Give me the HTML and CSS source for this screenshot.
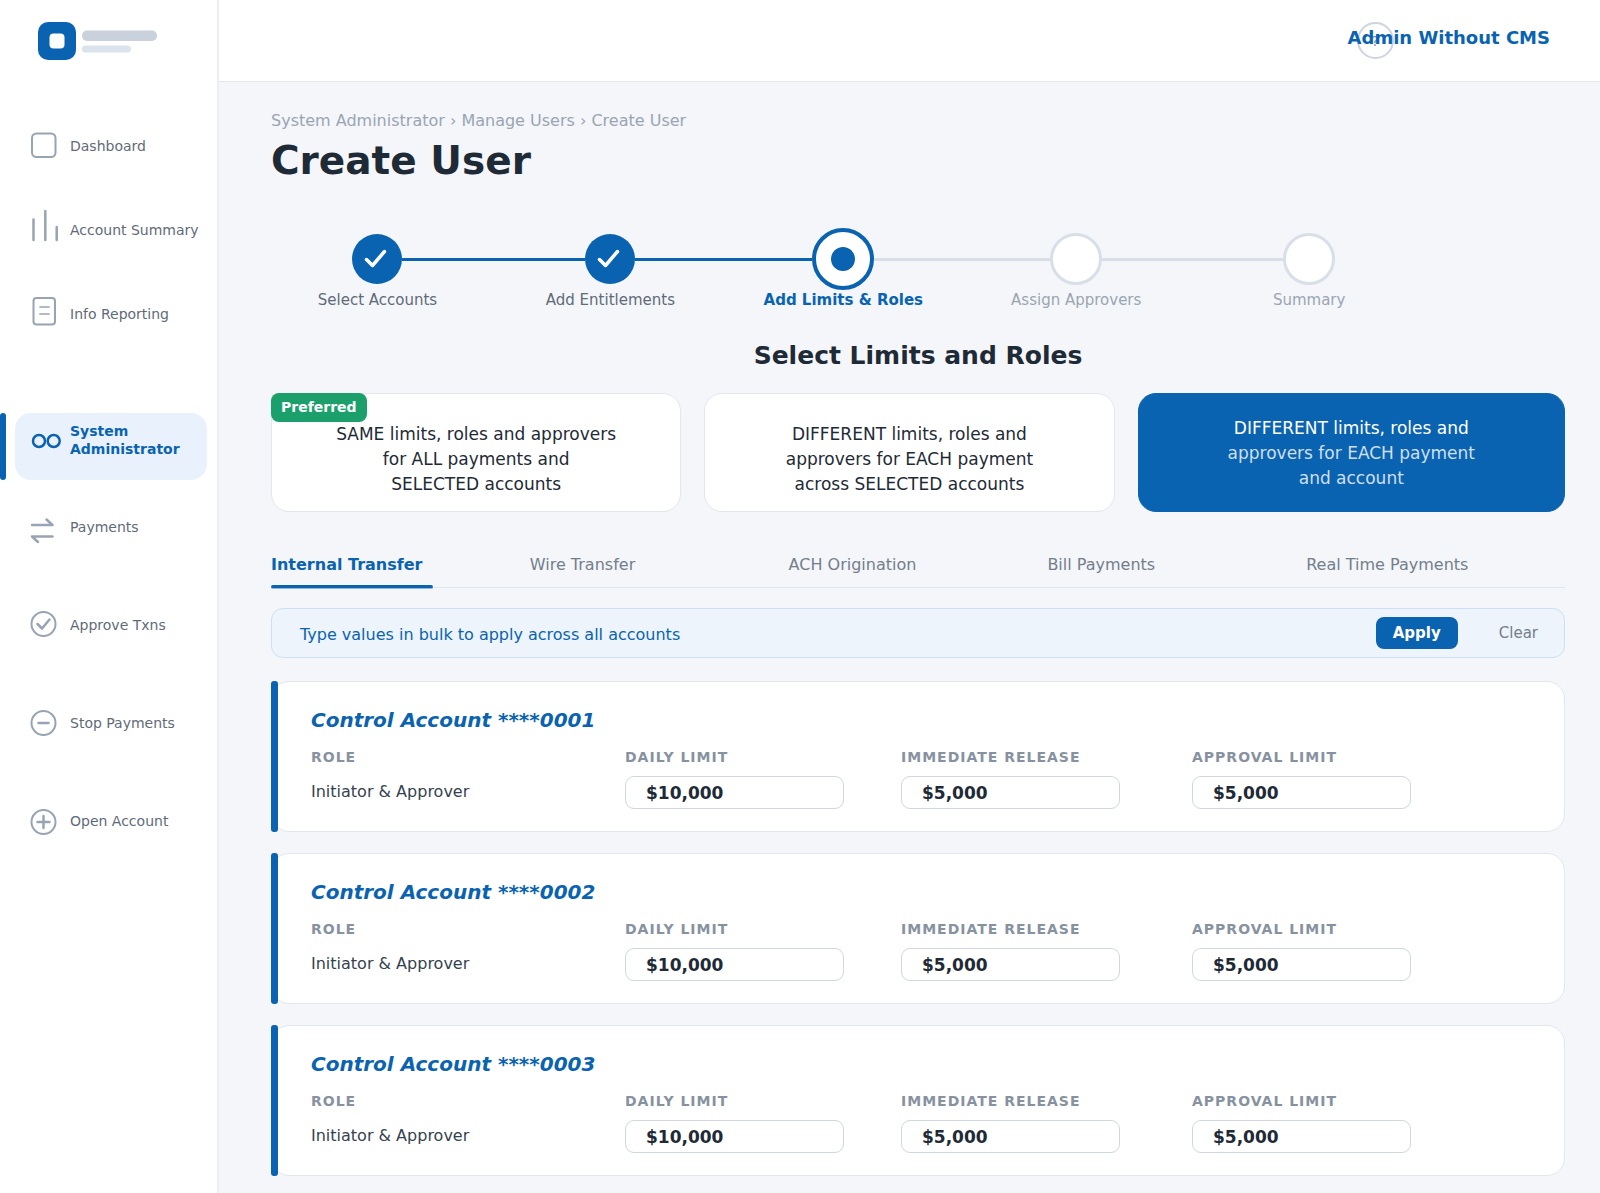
FILE: index.html
```html
<!DOCTYPE html>
<html lang="en">
<head>
<meta charset="UTF-8">
<meta name="viewport" content="width=device-width, initial-scale=1.0">
<title>Create User</title>
<link rel="stylesheet" href="styles.css">
</head>
<body>

<aside class="sidebar">
  <div class="logo">
    <svg width="120" height="38" viewBox="0 0 120 38">
      <rect width="38" height="38" rx="10" fill="#0a63b1"/>
      <rect x="11.500" y="11.500" width="15" height="15" rx="4" fill="#fff"/>
      <rect x="44" y="8.500" width="75" height="10.500" rx="5" fill="#c8d1dc"/>
      <rect x="44" y="23.500" width="49" height="7" rx="3.500" fill="#dbe3ec"/>
    </svg>
  </div>

  <nav class="nav">
    <a href="#" class="nav-item">
      <svg class="icon" viewBox="0 0 34 40"><rect x="4" y="7.500" width="23.500" height="23.500" rx="4.500"/></svg>
      <span>Dashboard</span>
    </a>
    <a href="#" class="nav-item">
      <svg class="icon thick" viewBox="0 0 34 40"><path d="M5.500 9.500v20.500M17.300 1v29M28.700 17v13"/></svg>
      <span>Account Summary</span>
    </a>
    <a href="#" class="nav-item">
      <svg class="icon" viewBox="0 0 34 40"><rect x="5.500" y="4" width="21.500" height="26.500" rx="3"/><path d="M12 13h9M12 20h9" stroke-width="1.700"/></svg>
      <span>Info Reporting</span>
    </a>
    <a href="#" class="nav-item active">
      <svg class="icon thick" viewBox="0 0 34 40"><circle cx="11" cy="20" r="6"/><circle cx="25.700" cy="20" r="6"/></svg>
      <span>System<br>Administrator</span>
    </a>
    <a href="#" class="nav-item tall">
      <svg class="icon thick" viewBox="0 0 34 40"><path d="M4 18h20.500l-6-5.500M24.500 29.500H4l6 5.500"/></svg>
      <span>Payments</span>
    </a>
    <a href="#" class="nav-item tall">
      <svg class="icon" viewBox="0 0 34 40"><circle cx="15.500" cy="19" r="12"/><path d="M9.500 19l4.500 4.500 7.500-9" stroke-width="2.500"/></svg>
      <span>Approve Txns</span>
    </a>
    <a href="#" class="nav-item tall">
      <svg class="icon" viewBox="0 0 34 40"><circle cx="15.500" cy="20" r="12"/><path d="M10.500 20h10" stroke-width="2.500"/></svg>
      <span>Stop Payments</span>
    </a>
    <a href="#" class="nav-item tall">
      <svg class="icon" viewBox="0 0 34 40"><circle cx="15.500" cy="21" r="12"/><path d="M9.500 21h12M15.500 15v12" stroke-width="2.500"/></svg>
      <span>Open Account</span>
    </a>
  </nav>
</aside>

<div class="page">
  <header class="topbar">
    <button type="button" class="help">?</button>
    <a href="#" class="user">Admin Without CMS</a>
  </header>

  <main class="content">
    <div class="breadcrumb"><a href="#">System Administrator</a> › <a href="#">Manage Users</a> › Create User</div>
    <h1>Create User</h1>

    <ol class="steps">
      <li class="step done">
        <div class="track"><div class="dot"><svg width="50" height="50" viewBox="0 0 50 50"><path d="M14.500 25.500l6 6L32.500 17.500"/></svg></div></div>
        <span>Select Accounts</span>
      </li>
      <li class="step done">
        <div class="track"><div class="dot"><svg width="50" height="50" viewBox="0 0 50 50"><path d="M14.500 25.500l6 6L32.500 17.500"/></svg></div></div>
        <span>Add Entitlements</span>
      </li>
      <li class="step current">
        <div class="track"><div class="dot"></div></div>
        <span>Add Limits &amp; Roles</span>
      </li>
      <li class="step">
        <div class="track"><div class="dot"></div></div>
        <span>Assign Approvers</span>
      </li>
      <li class="step">
        <div class="track"><div class="dot"></div></div>
        <span>Summary</span>
      </li>
    </ol>

    <h2>Select Limits and Roles</h2>

    <div class="options">
      <button type="button" class="option">
        <span class="badge">Preferred</span>
        SAME limits, roles and approvers<br>for ALL payments and<br>SELECTED accounts
      </button>
      <button type="button" class="option">
        DIFFERENT limits, roles and<br>approvers for EACH payment<br>across SELECTED accounts
      </button>
      <button type="button" class="option selected">
        <span class="lead">DIFFERENT limits, roles and</span><br>approvers for EACH payment<br>and account
      </button>
    </div>

    <nav class="tabs">
      <a href="#" class="tab active">Internal Transfer</a>
      <a href="#" class="tab">Wire Transfer</a>
      <a href="#" class="tab">ACH Origination</a>
      <a href="#" class="tab">Bill Payments</a>
      <a href="#" class="tab">Real Time Payments</a>
    </nav>

    <div class="bulk">
      <span class="bulk-text">Type values in bulk to apply across all accounts</span>
      <button type="button" class="apply">Apply</button>
      <button type="button" class="clear">Clear</button>
    </div>

    <section class="account">
      <h3>Control Account ****0001</h3>
      <div class="fields">
        <div class="field"><span class="label">ROLE</span><span class="role">Initiator &amp; Approver</span></div>
        <div class="field"><label class="label" for="daily1">DAILY LIMIT</label><input type="text" id="daily1" value="$10,000"></div>
        <div class="field"><label class="label" for="release1">IMMEDIATE RELEASE</label><input type="text" id="release1" value="$5,000"></div>
        <div class="field"><label class="label" for="approval1">APPROVAL LIMIT</label><input type="text" id="approval1" value="$5,000"></div>
      </div>
    </section>

    <section class="account">
      <h3>Control Account ****0002</h3>
      <div class="fields">
        <div class="field"><span class="label">ROLE</span><span class="role">Initiator &amp; Approver</span></div>
        <div class="field"><label class="label" for="daily2">DAILY LIMIT</label><input type="text" id="daily2" value="$10,000"></div>
        <div class="field"><label class="label" for="release2">IMMEDIATE RELEASE</label><input type="text" id="release2" value="$5,000"></div>
        <div class="field"><label class="label" for="approval2">APPROVAL LIMIT</label><input type="text" id="approval2" value="$5,000"></div>
      </div>
    </section>

    <section class="account">
      <h3>Control Account ****0003</h3>
      <div class="fields">
        <div class="field"><span class="label">ROLE</span><span class="role">Initiator &amp; Approver</span></div>
        <div class="field"><label class="label" for="daily3">DAILY LIMIT</label><input type="text" id="daily3" value="$10,000"></div>
        <div class="field"><label class="label" for="release3">IMMEDIATE RELEASE</label><input type="text" id="release3" value="$5,000"></div>
        <div class="field"><label class="label" for="approval3">APPROVAL LIMIT</label><input type="text" id="approval3" value="$5,000"></div>
      </div>
    </section>
  </main>
</div>

</body>
</html>
```

FILE: styles.css
```css
*, *::before, *::after {
  box-sizing: border-box;
}
body {
  margin: 0;
  display: flex;
  min-height: 100vh;
  background-color: #f4f6fa;
  color: #1e2a36;
  font-family: "DejaVu Sans", sans-serif;
  font-size: 16px;
}
a {
  color: inherit;
  text-decoration: none;
}
button, input {
  font-family: inherit;
  cursor: pointer;
}
h1, h2, h3 {
  margin: 0;
}

/* sidebar */
.sidebar {
  width: 219px;
  flex-shrink: 0;
  background: #fff;
  border-right: 2px solid #ebeef5;
}
.logo {
  height: 104px;
  padding: 22px 0 0 38px;
}
.nav-item {
  display: flex;
  align-items: center;
  gap: 8px;
  height: 84px;
  padding-left: 28px;
  color: #5f6b79;
  font-size: 14px;
  line-height: 18px;
}
.nav-item.tall {
  height: 98px;
}
.nav-item.active {
  position: relative;
  align-items: flex-start;
  height: 67px;
  margin: 57px 10px -2px 15px;
  padding: 8px 0 0 13px;
  border-radius: 16px;
  background: #e9f2fc;
  color: #0a63b1;
  font-weight: bold;
}
.nav-item.active span {
  padding-top: 1px;
}
.nav-item.active::before {
  content: "";
  position: absolute;
  left: -15px;
  top: 0;
  width: 6px;
  height: 100%;
  border-radius: 3px;
  background: #0a63b1;
}
.icon {
  width: 34px;
  height: 40px;
  flex-shrink: 0;
  fill: none;
  stroke: #98a4b3;
  stroke-width: 2;
  stroke-linecap: round;
  stroke-linejoin: round;
}
.icon.thick {
  stroke-width: 2.5;
}
.active .icon {
  stroke: #0a63b1;
}

/* top bar */
.page {
  flex: 1;
  min-width: 0;
}
.topbar {
  display: flex;
  align-items: center;
  justify-content: flex-end;
  height: 82px;
  padding-right: 50px;
  background: #fff;
  border-bottom: 1px solid #e3e8f0;
}
.help {
  width: 37px;
  height: 37px;
  padding: 0;
  border: 2px solid #cdd5e0;
  border-radius: 50%;
  background: none;
  color: #7d8896;
  font-size: 14px;
}
.user {
  z-index: 1;
  margin-left: -46px;
  padding-bottom: 6px;
  color: #0a63b1;
  font-size: 18px;
  font-weight: bold;
}

.content {
  padding: 29px 35px 16px 52px;
}
.breadcrumb {
  color: #9aa5b2;
  line-height: 20px;
}
h1 {
  margin-top: 6px;
  font-size: 39px;
  line-height: 48px;
}

/* stepper */
.steps {
  display: flex;
  width: 90%;
  margin: 43px 0 0 -10px;
  padding: 0;
  list-style: none;
}
.step {
  flex: 1;
  text-align: center;
  color: #9aa5b2;
  font-size: 15px;
  line-height: 20px;
}
.track {
  display: flex;
  align-items: center;
  height: 62px;
}
.track::before, .track::after {
  content: "";
  flex: 1;
  height: 3px;
  background: #d8dfe8;
}
.done .track::before, .done .track::after, .current .track::before {
  background: #0a63b1;
}
.step:first-child .track::before, .step:last-child .track::after {
  background: none;
}
.dot {
  width: 52px;
  height: 52px;
  border: 3px solid #d8dfe8;
  border-radius: 50%;
  background: #fff;
}
.done .dot {
  width: 50px;
  height: 50px;
  border: none;
  background: #0a63b1;
}
.dot path {
  fill: none;
  stroke: #fff;
  stroke-width: 3.5;
  stroke-linecap: round;
  stroke-linejoin: round;
}
.current .dot {
  width: 62px;
  height: 62px;
  padding: 15px;
  border: 4px solid #0a63b1;
}
.current .dot::before {
  content: "";
  display: block;
  width: 24px;
  height: 24px;
  border-radius: 50%;
  background: #0a63b1;
}
.step.done {
  color: #5f6b79;
}
.step.current {
  color: #0a63b1;
  font-weight: bold;
}

h2 {
  margin-top: 31px;
  text-align: center;
  font-size: 25px;
  line-height: 30px;
}

/* limit options */
.options {
  display: grid;
  grid-template-columns: 24fr 24fr 25fr;
  gap: 23px;
  margin-top: 22px;
}
.option {
  position: relative;
  height: 119px;
  padding: 13px 0 0;
  border: 1px solid #e1e7ef;
  border-radius: 18px;
  background: #fff;
  color: #1e2a36;
  font-size: 17px;
  line-height: 25px;
}
.option.selected {
  padding: 2px 0 0;
  border-color: #0a63b1;
  background: #0a63b1;
  color: #cfdff0;
}
.lead {
  color: #fff;
}
.badge {
  position: absolute;
  left: -1px;
  top: -1px;
  padding: 0 10px;
  border-radius: 8px;
  background: #1ba06c;
  color: #fff;
  font-size: 14px;
  font-weight: bold;
  line-height: 29px;
}

/* tabs */
.tabs {
  display: grid;
  grid-template-columns: repeat(5, 1fr);
  margin-top: 43px;
  border-bottom: 1px solid #e1e7f0;
}
.tab {
  justify-self: start;
  padding-bottom: 12px;
  color: #737e8b;
  line-height: 20px;
}
.tab.active {
  position: relative;
  padding-right: 11px;
  color: #0a63b1;
  font-weight: bold;
}
.tab.active::after {
  content: "";
  position: absolute;
  left: 0;
  right: 0;
  bottom: -2px;
  height: 4px;
  border-radius: 2px;
  background: #0a63b1;
  border-bottom: 1px solid #8fb5dc;
}

.bulk {
  display: flex;
  align-items: center;
  height: 50px;
  margin-top: 20px;
  padding: 0 18px 0 28px;
  border: 1px solid #cddff4;
  border-radius: 12px;
  background: #edf4fc;
}
.bulk-text {
  flex: 1;
  padding-top: 2px;
  color: #0a63b1;
}
.apply, .clear {
  height: 32px;
  border: none;
  border-radius: 8px;
  font-size: 15px;
}
.apply {
  width: 82px;
  margin-right: 33px;
  background: #0a63b1;
  color: #fff;
  font-weight: bold;
}
.clear {
  padding: 0 8px;
  background: none;
  color: #737e8b;
}

/* accounts */
.account {
  position: relative;
  margin-top: 21px;
  padding: 24px 0 22px 39px;
  border: 1px solid #e1e7ef;
  border-radius: 18px;
  background: #fff;
}
.bulk + .account {
  margin-top: 23px;
}
.account::before {
  content: "";
  position: absolute;
  left: -1px;
  top: -1px;
  bottom: -1px;
  width: 7px;
  border-radius: 3px;
  background: #0a63b1;
}
h3 {
  color: #0a63b1;
  font-size: 20px;
  font-style: italic;
  line-height: 28px;
}
.fields {
  display: grid;
  grid-template-columns: 314fr 276fr 291fr 372fr;
  margin-top: 14px;
}
.field {
  display: flex;
  flex-direction: column;
  gap: 10px;
}
.label {
  color: #8792a0;
  font-size: 14px;
  font-weight: bold;
  letter-spacing: 1px;
  line-height: 18px;
}
.role {
  color: #35424f;
  line-height: 32px;
}
.field input {
  width: 219px;
  height: 33px;
  padding: 0 20px;
  border: 1px solid #cfd7e3;
  border-radius: 9px;
  background: #fff;
  color: #1e2a36;
  font-size: 17px;
  font-weight: bold;
  cursor: text;
}
```
